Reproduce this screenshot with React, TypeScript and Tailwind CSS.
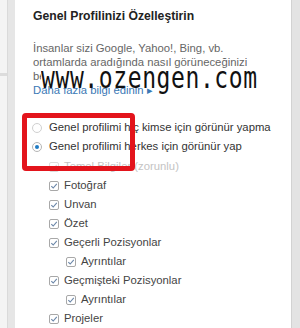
import React from "react";

interface Item {
  label: string;
  nested?: boolean;
  disabled?: boolean;
}

const items: Item[] = [
  { label: "Temel Bilgiler (zorunlu)", disabled: true },
  { label: "Fotoğraf" },
  { label: "Unvan" },
  { label: "Özet" },
  { label: "Geçerli Pozisyonlar" },
  { label: "Ayrıntılar", nested: true },
  { label: "Geçmişteki Pozisyonlar" },
  { label: "Ayrıntılar", nested: true },
  { label: "Projeler" },
];

function Checkbox({ disabled }: { disabled?: boolean }) {
  return (
    <span
      className={`flex h-[10px] w-[10px] flex-shrink-0 items-center justify-center rounded-[2px] border bg-white ${
        disabled ? "border-[#dcdcdc]" : "border-[#a8a8a8]"
      }`}
    >
      <svg width="8" height="8" viewBox="0 0 8 8">
        <polyline
          points="1.3,4.2 3.2,6 6.8,1.8"
          fill="none"
          stroke={disabled ? "#d2d9e2" : "#6a86a8"}
          strokeWidth="1.1"
        />
      </svg>
    </span>
  );
}

function Radio({ checked }: { checked?: boolean }) {
  return (
    <span
      className={`flex h-[10px] w-[10px] flex-shrink-0 items-center justify-center rounded-full border bg-white ${
        checked ? "border-[#b5b5b5]" : "border-[#d0d0d0]"
      }`}
    >
      {checked && <span className="h-[4px] w-[4px] rounded-full bg-[#1f7bc4]" />}
    </span>
  );
}

export default function App() {
  return (
    <div className="flex h-[328px] w-[300px] overflow-hidden bg-white font-['Liberation_Sans',Arial,sans-serif]">
      <div className="w-[7px] bg-[#f4f4f4]">
        <div className="h-[76px] border-b-[3px] border-[#dcdcdc]" />
      </div>
      <div className="w-[8px] border-l border-[#dadada] bg-[#e6e6e6]" />

      <div className="relative flex-1 pl-[18px] pt-[8px]">
        <h2 className="whitespace-nowrap text-[12.2px] font-bold leading-[16px] text-[#222]">
          Genel Profilinizi Özelleştirin
        </h2>

        <p className="mt-[17px] whitespace-nowrap text-[11.3px] leading-[14px] text-[#666]">
          İnsanlar sizi Google, Yahoo!, Bing, vb.
          <br />
          ortamlarda aradığında nasıl görüneceğinizi
          <br />
          belirleyin.
        </p>
        <p className="whitespace-nowrap text-[11.3px] leading-[14px] text-[#3a78b5]">Daha fazla bilgi edinin ▸</p>

        <div className="mt-[21px] flex flex-col whitespace-nowrap text-[11.3px] text-[#333]">
          <div className="-ml-px flex h-[19px] items-center gap-[7px]">
            <Radio />
            <span>Genel profilimi hiç kimse için görünür yapma</span>
          </div>
          <div className="-ml-px flex h-[19px] items-center gap-[7px]">
            <Radio checked />
            <span>Genel profilimi herkes için görünür yap</span>
          </div>
        </div>

        <div className="mt-[1px] flex flex-col whitespace-nowrap text-[11.3px] text-[#444]">
          {items.map((item, i) => (
            <div
              key={i}
              className={`flex h-[19px] items-center gap-[5px] ${item.nested ? "pl-[33px]" : "pl-[16px]"}`}
            >
              <Checkbox disabled={item.disabled} />
              <span className={item.disabled ? "text-[#c4c4c4]" : ""}>{item.label}</span>
            </div>
          ))}
        </div>

        {/* annotation box */}
        <div className="absolute left-[7px] top-[113px] h-[58px] w-[113px] rounded-[4px] border-[5px] border-[#e3141c]" />

        {/* watermark */}
        <div className="absolute left-[26px] top-[69px] h-[14px] bg-white pr-[2px]">
          <span className="-mt-[6px] inline-block origin-center scale-y-[1.3] font-['DejaVu_Sans_Mono',monospace] text-[23px] leading-[26px] tracking-[0.6px] text-[#111]">
            www.ozengen.com
          </span>
        </div>
      </div>

      <div className="w-[9px] border-l border-[#d2d2d2] bg-[#e3e3e3]" />
    </div>
  );
}
